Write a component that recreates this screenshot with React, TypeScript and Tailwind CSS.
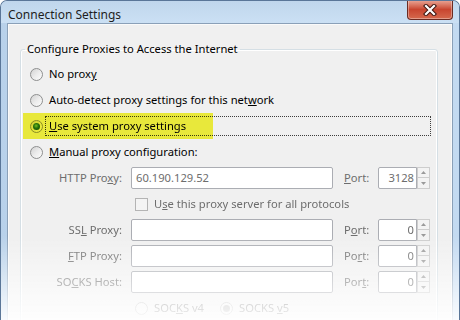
import clsx from 'clsx'

const TEXT = "font-['Noto_Sans',sans-serif] text-[11.2px] leading-[16px]"

function Radio({ checked = false, dim = false }: { checked?: boolean; dim?: boolean }) {
  return (
    <span
      className={clsx(
        'flex h-[13px] w-[13px] shrink-0 items-center justify-center rounded-full border',
        dim
          ? 'border-[#b8b8b8] bg-[#f4f4f4]'
          : 'border-[#8e8f8f] bg-gradient-to-br from-[#d2d2d2] via-[#ebebeb] to-[#fdfdfd]'
      )}
    >
      {checked && (
        <span
          className={clsx(
            'h-[7px] w-[7px] rounded-full',
            dim
              ? 'bg-[#b0b0b0]'
              : 'bg-[radial-gradient(circle_at_45%_40%,#7cc47c_0%,#2a7a2a_40%,#0b3a0b_100%)]'
          )}
        />
      )}
    </span>
  )
}

function Spin({ value }: { value: string }) {
  return (
    <div className="flex">
      <div className="flex h-[22px] w-[39px] items-center justify-end rounded-l-[2px] border border-[#abadb3] bg-white pr-[2px] text-[#6d6d6d]">
        {value}
      </div>
      <div className="flex h-[22px] w-[13px] flex-col">
        <div className="flex h-[11px] items-center justify-center border border-[#cdcdcd] bg-[#f3f3f3]">
          <svg width="5" height="3" viewBox="0 0 5 3"><path d="M0 3L2.5 0L5 3Z" fill="#9a9a9a" /></svg>
        </div>
        <div className="flex h-[11px] items-center justify-center border border-t-0 border-[#cdcdcd] bg-[#f3f3f3]">
          <svg width="5" height="3" viewBox="0 0 5 3"><path d="M0 0L2.5 3L5 0Z" fill="#9a9a9a" /></svg>
        </div>
      </div>
    </div>
  )
}

function ProxyRow({ label, port, value = '', portVal }: { label: React.ReactNode; port: React.ReactNode; value?: string; portVal: string }) {
  return (
    <div className="flex h-[26px] items-center text-[#6d6d6d]">
      <div className="w-[92px] text-right">{label}</div>
      <div className="ml-[9px] flex h-[22px] w-[202px] items-center rounded-[2px] border border-[#abadb3] bg-white pl-[4px]">
        {value}
      </div>
      <div className="ml-[11px] w-[34px]">{port}</div>
      <Spin value={portVal} />
    </div>
  )
}

export default function App() {
  return (
    <div className={clsx('relative flex h-[320px] w-[460px] flex-col overflow-hidden rounded-t-[7px] border border-b-0 border-[#5a7698] bg-gradient-to-r from-[#b8d1ea] via-[#c9def3] to-[#c3daf1]', TEXT)}>
      {/* title bar */}
      <div className="flex h-[26px] items-start bg-gradient-to-b from-[#c0d6ec] to-[#cbe0f4]">
        <div className="pl-[7px] pt-[6px] text-[12px] text-[#1e1e1e]">Connection Settings</div>
        <div className="ml-auto mr-[6px] -mt-px flex h-[20px] w-[46px] items-center justify-center rounded-b-[4px] border border-t-0 border-[#6b2b22] bg-gradient-to-b from-[#e9a899] via-[#c8452f] to-[#d5684d] shadow-[inset_0_0_0_1px_rgba(255,255,255,0.35)]">
          <svg width="14" height="12" viewBox="0 0 14 12">
            <path d="M3 2L11 10M11 2L3 10" stroke="#3e1610" strokeWidth="4.2" strokeLinecap="square" />
            <path d="M3 2L11 10M11 2L3 10" stroke="#ffffff" strokeWidth="2.2" strokeLinecap="square" />
          </svg>
        </div>
      </div>

      {/* client area */}
      <div className="mx-[6px] flex-1 border border-[#8aa0b8] bg-[#f0f0f0] shadow-[inset_0_0_0_1px_#fafafa]">
        <fieldset className="ml-[12px] mr-[14px] mt-[17px] rounded-[3px] border border-[#d5dfe5] p-0 shadow-[inset_0_0_0_1px_#ffffff]">
          <legend className="ml-[4px] px-[2px] text-black">Configure Proxies to Access the Internet</legend>
          <div className="pl-[9px] pr-[6px] pt-[4px] text-black">
            <div className="flex h-[26px] items-center">
              <Radio />
              <div className="ml-[2px] flex h-[20px] items-center border border-transparent pl-[3px]">No prox<u>y</u></div>
            </div>
            <div className="flex h-[26px] items-center">
              <Radio />
              <div className="ml-[2px] flex h-[20px] items-center border border-transparent pl-[3px]">Auto-detect proxy settings for this net<u>w</u>ork</div>
            </div>
            <div className="relative flex h-[26px] items-center">
              <Radio checked />
              <div className="ml-[2px] flex h-[20px] flex-1 items-center border border-dotted border-[#3c3c3c] pl-[3px]"><u>U</u>se system proxy settings</div>
              <div className="pointer-events-none absolute -left-[7px] top-0 h-[26px] w-[190px] bg-[#f7f73e] mix-blend-multiply" />
            </div>
            <div className="flex h-[26px] items-center">
              <Radio />
              <div className="ml-[2px] flex h-[20px] items-center border border-transparent pl-[3px]"><u>M</u>anual proxy configuration:</div>
            </div>

            <ProxyRow label={<>HTTP Pro<u>x</u>y:</>} port={<><u>P</u>ort:</>} value="60.190.129.52" portVal="3128" />
            <div className="flex h-[26px] items-center text-[#6d6d6d]">
              <span className="ml-[105px] h-[13px] w-[13px] border border-[#b4b4b4] bg-[#f4f4f4]" />
              <span className="ml-[6px]">U<u>s</u>e this proxy server for all protocols</span>
            </div>
            <ProxyRow label={<>SS<u>L</u> Proxy:</>} port={<>P<u>o</u>rt:</>} portVal="0" />
            <ProxyRow label={<><u>F</u>TP Proxy:</>} port={<>Po<u>r</u>t:</>} portVal="0" />
            <ProxyRow label={<>SO<u>C</u>KS Host:</>} port={<>Por<u>t</u>:</>} portVal="0" />
            <div className="flex h-[26px] items-center text-[#6d6d6d]">
              <div className="ml-[105px] flex w-[85px] items-center">
                <Radio dim />
                <span className="ml-[6px]">SOC<u>K</u>S v4</span>
              </div>
              <Radio checked dim />
              <span className="ml-[6px]">SOCKS <u>v</u>5</span>
            </div>
          </div>
        </fieldset>
      </div>

      {/* fade-out over the bottom of the capture */}
      <div className="pointer-events-none absolute inset-x-0 bottom-0 top-[234px] bg-gradient-to-b from-white/0 to-white/90" />
    </div>
  )
}
